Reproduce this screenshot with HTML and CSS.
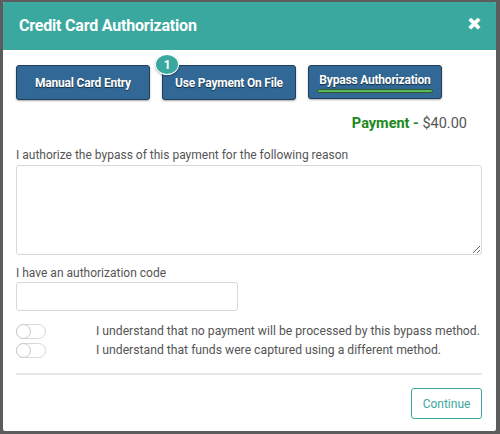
FILE: index.html
```html
<!DOCTYPE html>
<html>
<head>
<meta charset="utf-8">
<link rel="stylesheet" href="styles.css">
</head>
<body>
<div class="modal">
  <div class="header">
    <div class="title">Credit Card Authorization</div>
    <div class="close">&#x2715;</div>
  </div>
  <div class="body">
    <div class="tabs">
      <div class="tab">Manual Card Entry</div>
      <div class="tab tab-badge">Use Payment On File<span class="badge">1</span></div>
      <div class="tab active">Bypass Authorization<span class="bar"></span></div>
    </div>
    <div class="payment"><b>Payment -</b> $40.00</div>
    <label class="lbl">I authorize the bypass of this payment for the following reason</label>
    <textarea class="reason"></textarea>
    <label class="lbl lbl2">I have an authorization code</label>
    <input class="code" type="text">
    <div class="checks">
      <div class="check"><span class="toggle"><span class="knob"></span></span><span class="ctext">I understand that no payment will be processed by this bypass method.</span></div>
      <div class="check"><span class="toggle"><span class="knob"></span></span><span class="ctext">I understand that funds were captured using a different method.</span></div>
    </div>
    <div class="divider"></div>
    <div class="footer"><button class="continue">Continue</button></div>
  </div>
</div>
</body>
</html>
```
FILE: styles.css
```css
html, body { margin: 0; padding: 0; }
body {
  background: #5c5c5c;
  width: 500px;
  height: 434px;
  overflow: hidden;
  font-family: Roboto, "Liberation Sans", sans-serif;
  padding-top: 2px;
  box-sizing: border-box;
}
.modal {
  margin-left: 3px;
  width: 493px;
  height: 429px;
  background: #fff;
  border-radius: 2px;
  overflow: hidden;
  box-sizing: border-box;
}
.header {
  background: #3ba8a0;
  height: 48px;
  display: flex;
  align-items: center;
  justify-content: space-between;
  padding: 0 15px 0 16px;
}
.title {
  color: #fff;
  font-weight: 700;
  font-size: 16px;
  letter-spacing: -0.2px;
  margin-top: -1px;
}
.close {
  color: #fff;
  font-weight: 900;
  font-size: 15px;
  margin-top: -5px;
  -webkit-text-stroke: 1.5px #fff;
}
.body {
  padding: 15px 14px 0 13px;
}
.tabs {
  display: flex;
  gap: 12px;
}
.tab {
  position: relative;
  width: 134px;
  height: 35px;
  box-sizing: border-box;
  background: #316896;
  border: 1px solid #1f3f5a;
  border-radius: 3px;
  box-shadow: 0 1px 2px rgba(0,0,0,0.35);
  color: #fff;
  font-weight: 700;
  font-size: 12px;
  display: flex;
  align-items: center;
  justify-content: center;
  text-shadow: 0 1px 1px rgba(0,0,0,0.6);
  letter-spacing: -0.2px;
}
.tab.active {
  align-items: flex-start;
  padding-top: 7px;
  height: 34px;
}
.bar {
  position: absolute;
  left: 8px;
  right: 8px;
  top: 23px;
  height: 4px;
  border-radius: 2px;
  background: #5cb85c;
  border: 1px solid #2d5a2d;
  box-sizing: border-box;
}
.badge {
  position: absolute;
  left: -8px;
  top: -12px;
  width: 24px;
  height: 21px;
  border-radius: 50%;
  background: #3ba8a0;
  border: 1px solid #fff;
  box-sizing: border-box;
  box-shadow: 0 1px 2px rgba(0,0,0,0.3);
  color: #fff;
  font-size: 12px;
  display: flex;
  align-items: center;
  justify-content: center;
  text-shadow: none;
}
.payment {
  text-align: right;
  margin-top: 15px;
  padding-right: 15px;
  font-size: 14.5px;
  color: #555;
  height: 20px;
}
.payment b { color: #1b8a1b; }
.lbl {
  display: block;
  font-size: 12px;
  color: #555;
  margin-top: 13px;
}
.lbl2 { margin-top: 11px; }
.reason {
  display: block;
  width: 466px;
  height: 90px;
  margin-top: 3px;
  box-sizing: border-box;
  border: 1px solid #d8d8d8;
  border-radius: 3px;
  resize: vertical;
}
.code {
  display: block;
  width: 222px;
  height: 29px;
  margin-top: 2px;
  box-sizing: border-box;
  border: 1px solid #d8d8d8;
  border-radius: 3px;
}
.checks { margin-top: 12px; }
.check {
  display: flex;
  align-items: center;
  height: 16px;
  margin-bottom: 3px;
}
.toggle {
  width: 30px;
  height: 15px;
  border: 1px solid #d8d8d8;
  border-radius: 8px;
  box-sizing: border-box;
  position: relative;
  flex: none;
}
.knob {
  position: absolute;
  left: -1px;
  top: -1px;
  width: 15px;
  height: 15px;
  border-radius: 50%;
  border: 1px solid #c8c8c8;
  box-sizing: border-box;
  background: #fff;
}
.ctext {
  margin-left: 50px;
  font-size: 12.2px;
  color: #555;
  white-space: nowrap;
}
.divider {
  margin-top: 15px;
  height: 2px;
  background: #e8e8e8;
  width: 466px;
}
.footer {
  display: flex;
  justify-content: flex-end;
  width: 466px;
  margin-top: 13px;
}
.continue {
  width: 71px;
  height: 31px;
  background: #fff;
  border: 1px solid #3ba8a0;
  border-radius: 3px;
  color: #3ba8a0;
  font-family: Roboto, "Liberation Sans", sans-serif;
  font-size: 12px;
  padding: 0;
}
```
